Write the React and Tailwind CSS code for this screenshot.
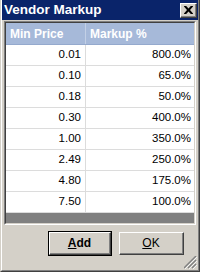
import React from "react";

const rows = [
  ["0.01", "800.0%"],
  ["0.10", "65.0%"],
  ["0.18", "50.0%"],
  ["0.30", "400.0%"],
  ["1.00", "350.0%"],
  ["2.49", "250.0%"],
  ["4.80", "175.0%"],
  ["7.50", "100.0%"],
];

export default function App() {
  return (
    <div
      className="w-[200px] h-[272px] bg-[#d4d0c8] border-l border-[#d4d0c8] border-r border-b border-r-[#404040] border-b-[#404040] overflow-hidden"
      style={{ fontFamily: '"Liberation Sans", Arial, sans-serif' }}
    >
      <div className="relative h-full flex flex-col border-l border-white border-r border-b border-r-[#808080] border-b-[#808080]">
        {/* Title bar */}
        <div className="h-[20px] bg-[#0a246a] flex items-center justify-between pl-[2px] pr-[1px] shrink-0">
          <span className="text-white font-bold text-[13.5px] leading-none">Vendor Markup</span>
          <div className="w-[17px] h-[15px] bg-[#d4d0c8] border-t border-l border-white border-r border-b border-r-[#404040] border-b-[#404040] flex">
            <div className="flex-1 border-r border-b border-r-[#808080] border-b-[#808080] flex items-center justify-center">
              <svg width="9" height="8" viewBox="0 0 9 8">
                <path d="M0 0h2.2l2.3 2.4L6.8 0H9v.6L6 4l3 3.4V8H6.8L4.5 5.6 2.2 8H0v-.6L3 4 0 .6z" fill="#000" />
              </svg>
            </div>
          </div>
        </div>

        {/* Grid */}
        <div className="mt-[1px] mx-[2px] h-[204px] border-t border-l border-[#808080] border-r border-b border-r-white border-b-white shrink-0">
          <div className="h-full border-t border-l border-[#404040] border-r border-b border-r-[#d4d0c8] border-b-[#d4d0c8] flex flex-col bg-white">
            <div className="h-[22px] bg-[#a6b9d9] flex text-white font-bold text-[12px] shrink-0 border-b border-[#94a9cd]">
              <div className="w-[80px] border-r border-[#c3d0e6] flex items-center pl-[4px]">Min Price</div>
              <div className="flex-1 flex items-center pl-[4px]">Markup %</div>
            </div>
            {rows.map(([a, b]) => (
              <div key={a} className="h-[21px] flex text-[11.5px] text-black border-b border-[#dcdcdc] shrink-0">
                <div className="w-[80px] border-r border-[#dcdcdc] flex items-center justify-end pr-[4px]">{a}</div>
                <div className="flex-1 flex items-center justify-end pr-[3px]">{b}</div>
              </div>
            ))}
            <div className="flex-1 bg-[#808080]" />
          </div>
        </div>

        {/* Buttons */}
        <div className="flex justify-end items-center gap-[7px] pr-[14px] mt-[6px]">
          <div className="w-[64px] h-[25px] border border-black flex">
            <div className="flex-1 border-t border-l border-white border-r border-b border-r-[#404040] border-b-[#404040] flex">
              <div className="flex-1 border-r border-b border-r-[#808080] border-b-[#808080] flex items-center justify-center text-[12px] font-bold text-black">
                <span><span className="underline">A</span>dd</span>
              </div>
            </div>
          </div>
          <div className="w-[65px] h-[23px] border-t border-l border-white border-r border-b border-r-[#404040] border-b-[#404040] flex">
            <div className="flex-1 border-r border-b border-r-[#808080] border-b-[#808080] flex items-center justify-center text-[12px] text-black">
              <span><span className="underline">O</span>K</span>
            </div>
          </div>
        </div>

        {/* Resize grip */}
        <svg className="absolute right-[1px] bottom-[1px]" width="13" height="13" viewBox="0 0 13 13">
          <path d="M12 0L0 12M12 4L4 12M12 8L8 12" stroke="#808080" strokeWidth="1.4" />
          <path d="M13 1L1 13M13 5L5 13M13 9L9 13" stroke="#ffffff" strokeWidth="0.8" />
        </svg>
      </div>
    </div>
  );
}
